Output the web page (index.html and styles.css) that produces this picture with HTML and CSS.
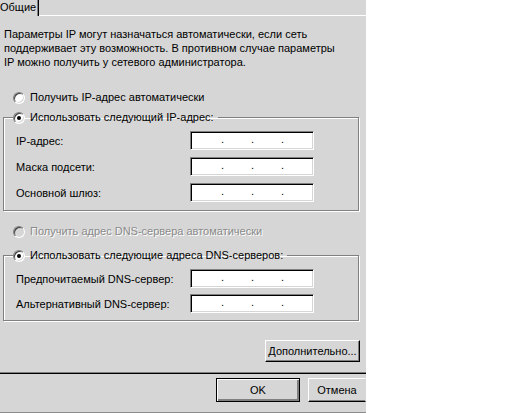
FILE: index.html
```html
<!DOCTYPE html>
<html lang="ru">
<head>
<meta charset="utf-8">
<title>Свойства: Протокол Интернета (TCP/IP)</title>
<link rel="stylesheet" href="styles.css">
</head>
<body>
<div class="dialog">
  <div class="tabs">
    <div class="tab">Общие</div>
    <div class="tab-rest"></div>
  </div>
  <div class="panel">
    <p class="intro">Параметры IP могут назначаться автоматически, если сеть поддерживает эту возможность. В противном случае параметры IP можно получить у сетевого администратора.</p>

    <div class="radio-row first">
      <span class="radio"></span><span>Получить IP-адрес автоматически</span>
    </div>

    <fieldset class="group g1">
      <legend class="radio-row"><span class="radio checked"></span><span>Использовать следующий IP-адрес:</span></legend>
      <div class="field-row"><span class="label">IP-адрес:</span><div class="ip"><span>.</span><span>.</span><span>.</span></div></div>
      <div class="field-row"><span class="label">Маска подсети:</span><div class="ip"><span>.</span><span>.</span><span>.</span></div></div>
      <div class="field-row"><span class="label">Основной шлюз:</span><div class="ip"><span>.</span><span>.</span><span>.</span></div></div>
    </fieldset>

    <div class="radio-row disabled">
      <span class="radio dis"></span><span>Получить адрес DNS-сервера автоматически</span>
    </div>

    <fieldset class="group g2">
      <legend class="radio-row"><span class="radio checked"></span><span>Использовать следующие адреса DNS-серверов:</span></legend>
      <div class="field-row"><span class="label">Предпочитаемый DNS-сервер:</span><div class="ip"><span>.</span><span>.</span><span>.</span></div></div>
      <div class="field-row"><span class="label">Альтернативный DNS-сервер:</span><div class="ip"><span>.</span><span>.</span><span>.</span></div></div>
    </fieldset>

    <div class="adv-row"><button class="btn adv">Дополнительно...</button></div>
  </div>
  <div class="footer">
    <button class="btn default">OK</button>
    <button class="btn cancel">Отмена</button>
  </div>
</div>
</body>
</html>
```

FILE: styles.css
```css
html, body {
  margin: 0;
  padding: 0;
  background: #ffffff;
}
body {
  font-family: "Liberation Sans", Arial, sans-serif;
  font-size: 11px;
  color: #000;
  width: 512px;
  height: 413px;
  overflow: hidden;
}
.dialog {
  width: 366px;
  height: 412px;
  background: #d6d6d6;
  border-bottom: 1px solid #8c8c8c;
  display: flex;
  flex-direction: column;
  overflow: hidden;
}
.tabs {
  display: flex;
  height: 16px;
  flex: 0 0 16px;
}
.tab {
  width: 39px;
  height: 16px;
  box-sizing: border-box;
  border-right: 1px solid #000;
  box-shadow: inset -1px 0 #808080;
  padding-top: 1px;
  line-height: 13px;
  white-space: nowrap;
  overflow: hidden;
}
.tab-rest {
  flex: 1;
  height: 16px;
  box-sizing: border-box;
  border-bottom: 1px solid #fff;
}
.panel {
  flex: 0 0 358px;
  height: 358px;
  box-sizing: border-box;
  border-bottom: 1px solid #000;
  box-shadow: inset 0 -1px #808080;
  padding: 11px 0 0 4px;
  display: flex;
  flex-direction: column;
}
.intro {
  margin: 0;
  line-height: 14px;
  width: 336px;
}
.radio-row {
  display: flex;
  align-items: center;
  gap: 5px;
  height: 13px;
  line-height: 13px;
  white-space: nowrap;
}
.radio-row.first {
  margin: 22px 0 0 9px;
}
.radio {
  width: 12px;
  height: 12px;
  box-sizing: border-box;
  border-radius: 50%;
  border: 1px solid;
  border-color: #808080 #ffffff #ffffff #808080;
  background: #fff;
  box-shadow: inset 1px 1px 0 #404040, inset -1px -1px 0 #d6d6d6;
  position: relative;
  flex: 0 0 12px;
}
.radio.checked::after {
  content: "";
  position: absolute;
  left: 3px;
  top: 3px;
  width: 4px;
  height: 4px;
  border-radius: 50%;
  background: #000;
}
.radio.dis {
  background: #d6d6d6;
}
.radio-row.disabled {
  color: #8a8a8a;
  text-shadow: 1px 1px 0 #ffffff;
  margin: 14px 0 0 9px;
}
.group {
  margin: 7px 0 0 -1px;
  width: 356px;
  box-sizing: border-box;
  border: 1px solid #808080;
  box-shadow: inset 1px 1px 0 #fff, 1px 1px 0 #fff;
  padding: 1px 12px 0 12px;
  min-width: 0;
}
.group legend {
  padding: 0 4px 0 0;
  margin-left: -3px;
}
.g1 {
  height: 100px;
}
.g2 {
  height: 72px;
  margin-top: 11px;
}
.field-row {
  display: flex;
  align-items: center;
  height: 19px;
  margin-top: 7px;
}
.g1 .field-row:first-of-type,
.g2 .field-row:first-of-type {
  margin-top: 6px;
}
.g2 .field-row {
  margin-top: 6px;
}
.label {
  width: 174px;
  flex: 0 0 174px;
}
.ip {
  width: 124px;
  height: 19px;
  box-sizing: border-box;
  background: #fff;
  border: 1px solid;
  border-color: #808080 #ffffff #ffffff #808080;
  box-shadow: inset 1px 1px 0 #000, inset -1px -1px 0 #d6d6d6;
  display: flex;
  padding-left: 30px;
  gap: 27px;
  line-height: 15px;
  font-size: 11px;
}
.ip span {
  width: 3px;
}
.adv-row {
  display: flex;
  justify-content: flex-start;
  padding-left: 261px;
  margin-top: 19px;
}
.btn {
  font-family: "Liberation Sans", Arial, sans-serif;
  font-size: 11px;
  color: #000;
  background: #d6d6d6;
  border: 1px solid;
  border-color: #ffffff #000000 #000000 #ffffff;
  box-shadow: inset -1px -1px 0 #808080;
  padding: 0;
  margin: 0;
  height: 22px;
  box-sizing: border-box;
  white-space: nowrap;
}
.adv {
  width: 95px;
}
.footer {
  display: flex;
  gap: 8px;
  padding: 4px 0 0 216px;
}
.footer .btn {
  width: 84px;
  height: 24px;
  flex: 0 0 84px;
}
.footer .btn.cancel {
  width: 58px;
  flex: 0 0 58px;
  border-right-color: #d6d6d6;
  box-shadow: inset 0 -1px 0 #808080;
}
.footer .btn.default {
  border: 1px solid #000;
  box-shadow: inset 1px 1px 0 #fff, inset -2px -2px 0 #808080, inset -1px -1px 0 #000;
}
```
